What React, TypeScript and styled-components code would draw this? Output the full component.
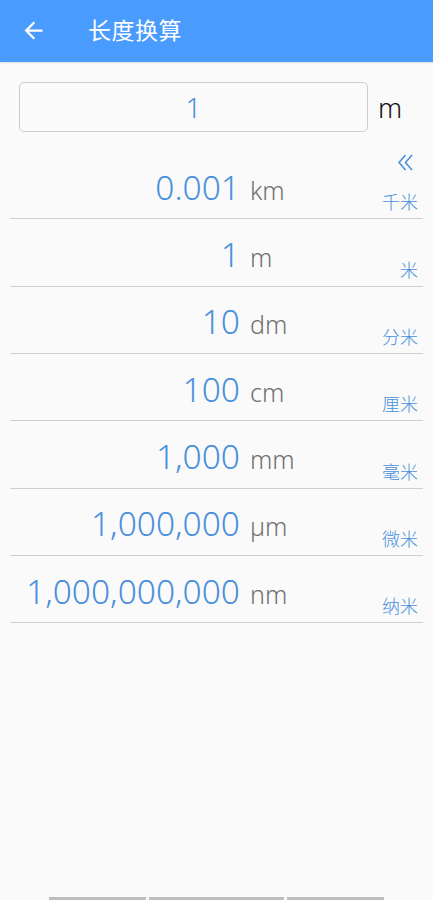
import React from "react";
import styled, { createGlobalStyle } from "styled-components";

const GlobalStyle = createGlobalStyle`
  html, body {
    margin: 0;
    padding: 0;
    background: #fafafa;
    font-family: "Noto Sans", "Noto Sans CJK SC", sans-serif;
  }
`;

const colors = {
  header: "#4a9bfe",
  blue: "#4a90dc",
  grey: "#707070",
  line: "#cfcfcf",
};

const units = [
  { value: "0.001", unit: "km", label: "千米" },
  { value: "1", unit: "m", label: "米" },
  { value: "10", unit: "dm", label: "分米" },
  { value: "100", unit: "cm", label: "厘米" },
  { value: "1,000", unit: "mm", label: "毫米" },
  { value: "1,000,000", unit: "µm", label: "微米" },
  { value: "1,000,000,000", unit: "nm", label: "纳米" },
];

const BackArrow = () => (
  <svg width="27" height="27" viewBox="0 0 24 24" fill="#fff">
    <path d="M20 11H7.83l5.59-5.59L12 4l-8 8 8 8 1.41-1.41L7.83 13H20v-2z" />
  </svg>
);

const DoubleChevron = () => (
  <svg width="15" height="17" viewBox="0 0 15 17" fill="none" stroke={colors.blue} strokeWidth="1.6">
    <path d="M7.5 1 1 8.5 7.5 16" />
    <path d="M14 1 7.5 8.5 14 16" />
  </svg>
);

export default function App() {
  return (
    <>
      <GlobalStyle />
      <Page>
        <Toolbar>
          <BackButton>
            <BackArrow />
          </BackButton>
          <Title>长度换算</Title>
        </Toolbar>
        <InputRow>
          <InputBox>1</InputBox>
          <InputUnit>m</InputUnit>
        </InputRow>
        <List>
          {units.map((u, i) => (
            <Row key={u.unit}>
              <Amount>
                <Value>{u.value}</Value>
                <Unit>{u.unit}</Unit>
              </Amount>
              <Side>
                {i === 0 && (
                  <Collapse>
                    <DoubleChevron />
                  </Collapse>
                )}
                <Label>{u.label}</Label>
              </Side>
            </Row>
          ))}
        </List>
        <Spacer />
        <BottomBars>
          <Bar $w={97} />
          <Bar $w={135} />
          <Bar $w={97} />
        </BottomBars>
      </Page>
    </>
  );
}

const Page = styled.div`
  min-height: 900px;
  display: flex;
  flex-direction: column;
`;

const Toolbar = styled.div`
  height: 62px;
  background: ${colors.header};
  display: flex;
  align-items: center;
  box-shadow: 0 1px 2px rgba(0, 0, 0, 0.12);
`;

const BackButton = styled.div`
  width: 27px;
  height: 27px;
  margin: 0 0 2px 20px;
  display: flex;
`;

const Title = styled.div`
  margin: 0 0 4px 41px;
  color: #fff;
  font-size: 23px;
  letter-spacing: 0.5px;
`;

const InputRow = styled.div`
  display: flex;
  align-items: center;
  padding: 20px 0 0 19px;
  height: 50px;
`;

const InputBox = styled.div`
  width: 347px;
  height: 48px;
  border: 1px solid #cccccc;
  border-radius: 5px;
  background: #fafafa;
  display: flex;
  align-items: center;
  justify-content: center;
  color: ${colors.blue};
  font-size: 28px;
  font-weight: 300;
`;

const InputUnit = styled.div`
  margin: 0 0 0 10px;
  font-size: 27px;
  color: #111;
  font-weight: 300;
`;

const List = styled.div`
  margin-top: 20px;
  padding: 0 10px;
`;

const Row = styled.div`
  height: 66.33px;
  border-bottom: 1px solid ${colors.line};
  display: flex;
  align-items: center;
`;

const Amount = styled.div`
  flex: 1;
  display: flex;
  align-items: baseline;
  margin-top: 3px;
`;

const Value = styled.div`
  width: 230px;
  text-align: right;
  color: ${colors.blue};
  font-size: 33.5px;
  font-weight: 300;
  line-height: 40px;
  white-space: nowrap;
`;

const Unit = styled.div`
  margin-left: 10px;
  color: ${colors.grey};
  font-size: 25px;
  font-weight: 300;
`;

const Side = styled.div`
  align-self: stretch;
  display: flex;
  flex-direction: column;
  align-items: flex-end;
  justify-content: flex-end;
  padding: 0 5px 6px 0;
`;

const Collapse = styled.div`
  display: flex;
  margin: 2px 5px auto 0;
`;

const Label = styled.div`
  color: ${colors.blue};
  font-size: 18px;
  font-weight: 300;
  line-height: 20px;
`;

const Spacer = styled.div`
  flex: 1;
`;

const BottomBars = styled.div`
  display: flex;
  justify-content: center;
  gap: 3px;
  height: 3px;
  padding-right: 1px;
`;

const Bar = styled.div<{ $w: number }>`
  width: ${(p) => p.$w}px;
  background: #bdbdbd;
`;
